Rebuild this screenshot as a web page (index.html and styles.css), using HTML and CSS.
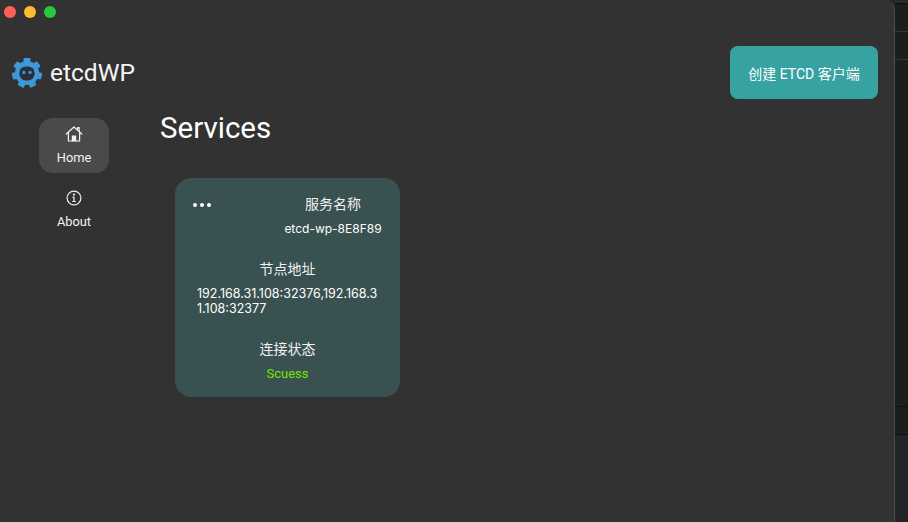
FILE: index.html
```html
<!DOCTYPE html>
<html lang="zh-CN">
  <head>
    <meta charset="UTF-8" />
    <meta name="viewport" content="width=device-width, initial-scale=1.0" />
    <title>etcdWP</title>
    <link rel="stylesheet" href="styles.css">
  </head>
  <body>
    <div class="window">
      <div class="titlebar">
        <span class="light red"></span>
        <span class="light yellow"></span>
        <span class="light green"></span>
      </div>
      <header class="header">
        <div class="brand">
          <svg class="logo" width="32" height="32" viewBox="0 0 32 32">
            <g fill="#3d98da">
              <circle cx="16" cy="16" r="12" />
              <rect x="12.6" y="1" width="6.8" height="8" rx="1.2" />
              <rect x="12.6" y="1" width="6.8" height="8" rx="1.2" transform="rotate(51.4 16 16)" />
              <rect x="12.6" y="1" width="6.8" height="8" rx="1.2" transform="rotate(102.8 16 16)" />
              <rect x="12.6" y="1" width="6.8" height="8" rx="1.2" transform="rotate(154.3 16 16)" />
              <rect x="12.6" y="1" width="6.8" height="8" rx="1.2" transform="rotate(205.7 16 16)" />
              <rect x="12.6" y="1" width="6.8" height="8" rx="1.2" transform="rotate(257.1 16 16)" />
              <rect x="12.6" y="1" width="6.8" height="8" rx="1.2" transform="rotate(308.6 16 16)" />
            </g>
            <rect x="8.4" y="9.4" width="15.2" height="14" rx="6.4" fill="#2a3036" />
            <circle cx="12.9" cy="15.4" r="1.6" fill="#3d98da" />
            <circle cx="19.1" cy="15.4" r="1.6" fill="#3d98da" />
          </svg>
          <span class="brand-name">etcdWP</span>
        </div>
        <button class="create-btn">创建 ETCD 客户端</button>
      </header>
      <div class="body-row">
        <nav class="sidebar">
          <a class="nav-item active">
            <svg width="18" height="18" viewBox="0 0 18 18" fill="none" stroke="#f2f2f2" stroke-width="1.2" stroke-linejoin="round" stroke-linecap="round">
              <path d="M1.2 9 9 2l7.8 7" />
              <path d="M3.4 7.4V16h11.2V7.4" />
              <path d="M12.6 4.6V2.6h1.6v3.4" />
              <path d="M7.4 16v-4.8h3.2V16" fill="#f2f2f2" />
            </svg>
            <span>Home</span>
          </a>
          <a class="nav-item">
            <svg width="18" height="18" viewBox="0 0 18 18" fill="none" stroke="#f2f2f2" stroke-width="1.2" stroke-linecap="round">
              <circle cx="9" cy="9" r="6.9" />
              <path d="M9 8.2v4.2M7.7 12.5h2.6M7.9 8.2H9" />
              <circle cx="9" cy="5.6" r="0.5" fill="#f2f2f2" />
            </svg>
            <span>About</span>
          </a>
        </nav>
        <main class="content">
          <h1 class="page-title">Services</h1>
          <section class="card">
            <div class="card-top">
              <div class="dots"><i></i><i></i><i></i></div>
              <div class="field name-field">
                <div class="label">服务名称</div>
                <div class="value name-value">etcd-wp-8E8F89</div>
              </div>
            </div>
            <div class="field">
              <div class="label">节点地址</div>
              <div class="value address">192.168.31.108:32376,192.168.31.108:32377</div>
            </div>
            <div class="field">
              <div class="label">连接状态</div>
              <div class="value status">Scuess</div>
            </div>
          </section>
        </main>
      </div>
    </div>
    <div class="backdrop">
      <div class="strip s1"></div>
      <div class="strip s2"></div>
      <div class="strip s3"></div>
      <div class="strip s4"></div>
      <div class="strip s5"></div>
      <div class="strip s6"></div>
    </div>
  </body>
</html>
```

FILE: styles.css
```css
html,
body {
  height: 100%;
}
body {
  margin: 0;
  display: flex;
  overflow: hidden;
  background-color: #22242a;
  color: #fff;
  font-family: Inter, "Noto Sans CJK SC", sans-serif;
}
.window {
  width: 895px;
  flex: none;
  box-sizing: border-box;
  background-color: #323232;
  border-right: 1px solid #4c4c4c;
  border-top-right-radius: 10px;
}
.titlebar {
  display: flex;
  gap: 8px;
  padding: 6px 0 0 4px;
  height: 46px;
  box-sizing: border-box;
}
.light {
  width: 12px;
  height: 12px;
  border-radius: 50%;
}
.red {
  background-color: #ff5f57;
}
.yellow {
  background-color: #febc2e;
}
.green {
  background-color: #28c840;
}
.header {
  display: flex;
  justify-content: space-between;
  align-items: center;
  height: 53px;
  padding: 0 16px 0 11px;
}
.brand {
  display: flex;
  align-items: center;
  gap: 7px;
}
.brand-name {
  font-family: Roboto, sans-serif;
  font-size: 24.5px;
  font-weight: 400;
  color: #f5f5f5;
}
.create-btn {
  width: 148px;
  height: 53px;
  padding: 0;
  border: none;
  border-radius: 8px;
  background-color: #36a2a2;
  color: #fff;
  font-family: Roboto, "Noto Sans CJK SC", sans-serif;
  font-size: 14px;
  font-weight: 400;
}
.body-row {
  display: flex;
  padding-top: 11px;
}
.sidebar {
  width: 70px;
  margin-left: 39px;
  flex: none;
  padding-top: 8px;
  display: flex;
  flex-direction: column;
  gap: 9px;
}
.nav-item {
  height: 55px;
  display: flex;
  flex-direction: column;
  align-items: center;
  gap: 6px;
  padding-top: 7px;
  box-sizing: border-box;
  border-radius: 14px;
  font-family: Roboto, sans-serif;
  font-size: 12.8px;
  font-weight: 400;
  line-height: 17px;
  color: #f4f4f4;
}
.nav-item.active {
  background-color: #4a4a4a;
}
.content {
  margin-left: 51px;
}
.page-title {
  margin: 0;
  font-family: Roboto, sans-serif;
  font-size: 29.5px;
  font-weight: 400;
  line-height: 36px;
  color: #fff;
}
.card {
  width: 225px;
  height: 219px;
  margin: 32px 0 0 15px;
  padding: 16px 17px 0;
  box-sizing: border-box;
  border-radius: 16px;
  background-color: #395150;
}
.card-top {
  display: flex;
  justify-content: space-between;
  margin-bottom: 23px;
}
.dots {
  display: flex;
  gap: 3px;
  padding: 9px 0 0 1px;
}
.dots i {
  width: 4px;
  height: 4px;
  border-radius: 50%;
  background-color: #fff;
}
.name-field {
  width: 100px;
}
.field {
  text-align: center;
  margin-bottom: 23px;
}
.card-top .field {
  margin-bottom: 0;
}
.label {
  font-size: 14px;
  line-height: 20px;
  color: #f2f2f2;
}
.value {
  margin-top: 7px;
  font-size: 12.5px;
  line-height: 15px;
  color: #fff;
}
.name-value {
  font-size: 12px;
  white-space: nowrap;
}
.address {
  padding-left: 5px;
  text-align: left;
  word-break: break-all;
}
.status {
  font-family: Roboto, sans-serif;
  font-size: 13px;
  color: #72e600;
}
.backdrop {
  flex: 1;
  display: flex;
  flex-direction: column;
}
.strip {
  border-bottom: 1px solid #0e0f10;
  background-color: #1c1d1d;
}
.s1 {
  height: 3px;
  background-color: #2a2a2a;
}
.s2,
.s3 {
  height: 27px;
  border-bottom-color: #34383a;
}
.s4 {
  height: 346px;
}
.s5 {
  height: 27px;
}
.s6 {
  flex: 1;
  border-bottom: none;
  background-color: #22242a;
}
```
